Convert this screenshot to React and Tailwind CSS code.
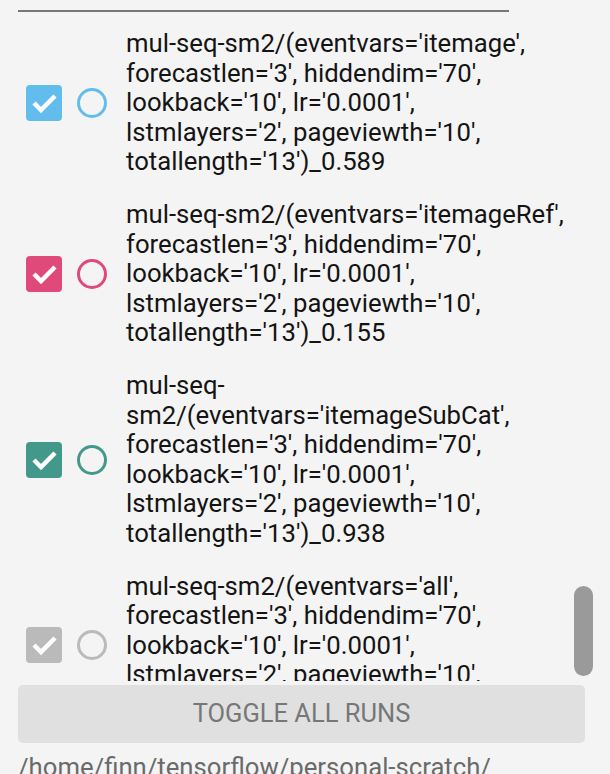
import React from 'react';

const runs = [
  {
    color: '#62bdec',
    lines: [
      "mul-seq-sm2/(eventvars='itemage',",
      "forecastlen='3', hiddendim='70',",
      "lookback='10', lr='0.0001',",
      "lstmlayers='2', pageviewth='10',",
      "totallength='13')_0.589",
    ],
  },
  {
    color: '#df4a7b',
    lines: [
      "mul-seq-sm2/(eventvars='itemageRef',",
      "forecastlen='3', hiddendim='70',",
      "lookback='10', lr='0.0001',",
      "lstmlayers='2', pageviewth='10',",
      "totallength='13')_0.155",
    ],
  },
  {
    color: '#42988a',
    lines: [
      'mul-seq-',
      "sm2/(eventvars='itemageSubCat',",
      "forecastlen='3', hiddendim='70',",
      "lookback='10', lr='0.0001',",
      "lstmlayers='2', pageviewth='10',",
      "totallength='13')_0.938",
    ],
  },
  {
    color: '#bababa',
    lines: [
      "mul-seq-sm2/(eventvars='all',",
      "forecastlen='3', hiddendim='70',",
      "lookback='10', lr='0.0001',",
      "lstmlayers='2', pageviewth='10',",
      "totallength='13')_0.000",
    ],
  },
];

function Check({ color }) {
  return (
    <div
      className="w-[36px] h-[36px] rounded-[4px] shrink-0 flex items-center justify-center"
      style={{ backgroundColor: color }}
    >
      <svg width="36" height="36" viewBox="0 0 36 36">
        <path d="M8 18 L15 25 L29 11" fill="none" stroke="white" strokeWidth="4.5" />
      </svg>
    </div>
  );
}

function Ring({ color }) {
  return (
    <div
      className="w-[30px] h-[30px] rounded-full border-[3px] shrink-0 ml-[15px]"
      style={{ borderColor: color }}
    />
  );
}

export default function App() {
  return (
    <div className="w-[610px] h-[774px] bg-[#f4f4f4] overflow-hidden font-['Roboto',sans-serif] text-[25.7px] leading-[29.6px] text-[#141414]">
      <div className="relative h-[681px] overflow-hidden">
        <div className="ml-[18px] mt-[10px] h-[2px] w-[491px] bg-[#777777]" />
        <div className="pt-[5.5px]">
          {runs.map((run, i) => (
            <div key={i} className="flex items-center pl-[26px] py-[11.5px]">
              <Check color={run.color} />
              <Ring color={run.color} />
              <div className="ml-[19px] whitespace-nowrap">
                {run.lines.map((l, j) => (
                  <div key={j}>{l}</div>
                ))}
              </div>
            </div>
          ))}
        </div>
        <div className="absolute left-[574px] top-[586px] w-[19px] h-[90px] rounded-full bg-[#9a9a9a]" />
      </div>
      <button className="block mx-[18px] mt-[4px] w-[567px] h-[58px] rounded-[5px] bg-[#e0e0e0] text-[#777777] text-[25.5px]">
        TOGGLE ALL RUNS
      </button>
      <div className="ml-[18px] mt-[10px] text-[#6a6a6a] whitespace-nowrap">
        /home/finn/tensorflow/personal-scratch/
      </div>
    </div>
  );
}
